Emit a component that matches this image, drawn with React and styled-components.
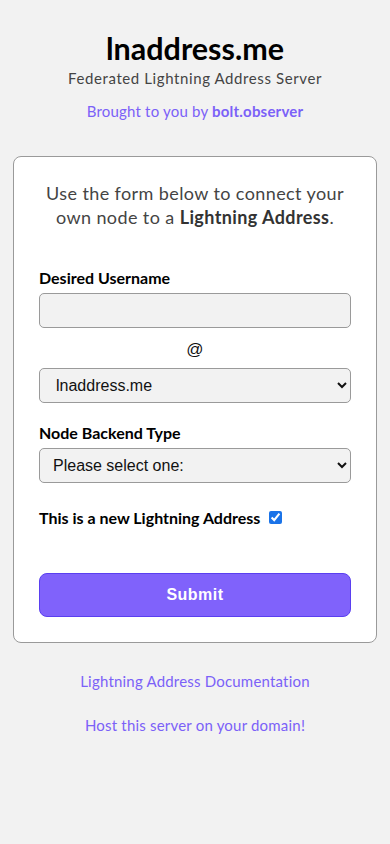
import React from "react";
import styled, { createGlobalStyle } from "styled-components";

const Global = createGlobalStyle`
  html, body { margin: 0; padding: 0; background: #f2f2f2; }
  body { font-family: Lato, "Noto Sans", sans-serif; color: #111; }
  * { box-sizing: border-box; }
`;

const Page = styled.div`
  min-height: 844px;
  padding: 28px 13px 40px 13px;
  display: flex;
  flex-direction: column;
  align-items: stretch;
`;

const Header = styled.header`
  display: flex;
  flex-direction: column;
  align-items: center;
  text-align: center;
`;

const Title = styled.h1`
  margin: 0;
  font-size: 30.5px;
  line-height: 40px;
  font-weight: 700;
  color: #000;
`;

const Subtitle = styled.div`
  font-size: 15px;
  line-height: 20px;
  color: #444;
  letter-spacing: 0.6px;
`;

const Credit = styled.div`
  margin-top: 13px;
  font-size: 15px;
  line-height: 20px;
  color: #7b61f8;
  letter-spacing: 0.2px;
`;

const Link = styled.a`
  color: #7b61f8;
  text-decoration: none;
  font-weight: ${(p) => (p.$bold ? 700 : 400)};
`;

const Card = styled.form`
  margin-top: 35px;
  background: #fff;
  border: 1px solid #9a9a9a;
  border-radius: 8px;
  padding: 24px 25px 25px 25px;
  display: flex;
  flex-direction: column;
`;

const Intro = styled.p`
  margin: 0 0 38px 0;
  text-align: center;
  font-size: 18px;
  line-height: 24px;
  color: #444;
  letter-spacing: 0.4px;
  b { color: #333; font-weight: 700; }
`;

const Label = styled.label`
  display: block;
  font-size: 16px;
  line-height: 22px;
  font-weight: 700;
  color: #000;
  margin-bottom: 4px;
`;

const Input = styled.input`
  width: 100%;
  height: 35px;
  background: #f2f2f2;
  border: 1px solid #9a9a9a;
  border-radius: 5px;
  font-family: "Liberation Sans", Arial, sans-serif;
  font-size: 16px;
  padding: 0 10px;
`;

const At = styled.div`
  text-align: center;
  font-family: "Liberation Sans", Arial, sans-serif;
  font-size: 17px;
  line-height: 22px;
  margin: 11px 0 7px 0;
`;

const Select = styled.select`
  width: 100%;
  height: 35px;
  background: #f2f2f2;
  border: 1px solid #9a9a9a;
  border-radius: 5px;
  font-family: "Liberation Sans", Arial, sans-serif;
  font-size: 16px;
  color: #111;
  padding: 0 ${(p) => p.$pad || 9}px;
`;

const Group = styled.div`
  margin-top: ${(p) => p.$top || 0}px;
`;

const CheckRow = styled.div`
  margin-top: 25px;
  display: flex;
  align-items: center;
  gap: 9px;
  font-size: 16px;
  font-weight: 700;
  color: #000;
  input { margin: 0; width: 13px; height: 13px; accent-color: #1a73e8; }
`;

const Submit = styled.button`
  margin-top: 46px;
  width: 100%;
  height: 44px;
  background: #8062fb;
  border: 1px solid #5a3ff0;
  border-radius: 8px;
  color: #fff;
  font-family: "Liberation Sans", Arial, sans-serif;
  font-weight: 700;
  font-size: 16px;
  letter-spacing: 0.5px;
`;

const Footer = styled.div`
  margin-top: 28px;
  display: flex;
  flex-direction: column;
  align-items: center;
  gap: 24px;
  font-size: 15px;
  line-height: 20px;
  letter-spacing: 0.2px;
`;

export default function App() {
  return (
    <>
      <Global />
      <Page>
        <Header>
          <Title>lnaddress.me</Title>
          <Subtitle>Federated Lightning Address Server</Subtitle>
          <Credit>
            Brought to you by <Link $bold href="#">bolt.observer</Link>
          </Credit>
        </Header>
        <Card onSubmit={(e) => e.preventDefault()}>
          <Intro>
            Use the form below to connect your own node to a <b>Lightning Address</b>.
          </Intro>
          <Group>
            <Label>Desired Username</Label>
            <Input type="text" />
          </Group>
          <At>@</At>
          <Select $pad={12} defaultValue="lnaddress.me">
            <option value="lnaddress.me">lnaddress.me</option>
          </Select>
          <Group $top={19}>
            <Label>Node Backend Type</Label>
            <Select defaultValue="">
              <option value="">Please select one:</option>
              <option value="lnd">LND</option>
            </Select>
          </Group>
          <CheckRow>
            <span>This is a new Lightning Address</span>
            <input type="checkbox" defaultChecked />
          </CheckRow>
          <Submit type="submit">Submit</Submit>
        </Card>
        <Footer>
          <Link href="#">Lightning Address Documentation</Link>
          <Link href="#">Host this server on your domain!</Link>
        </Footer>
      </Page>
    </>
  );
}
